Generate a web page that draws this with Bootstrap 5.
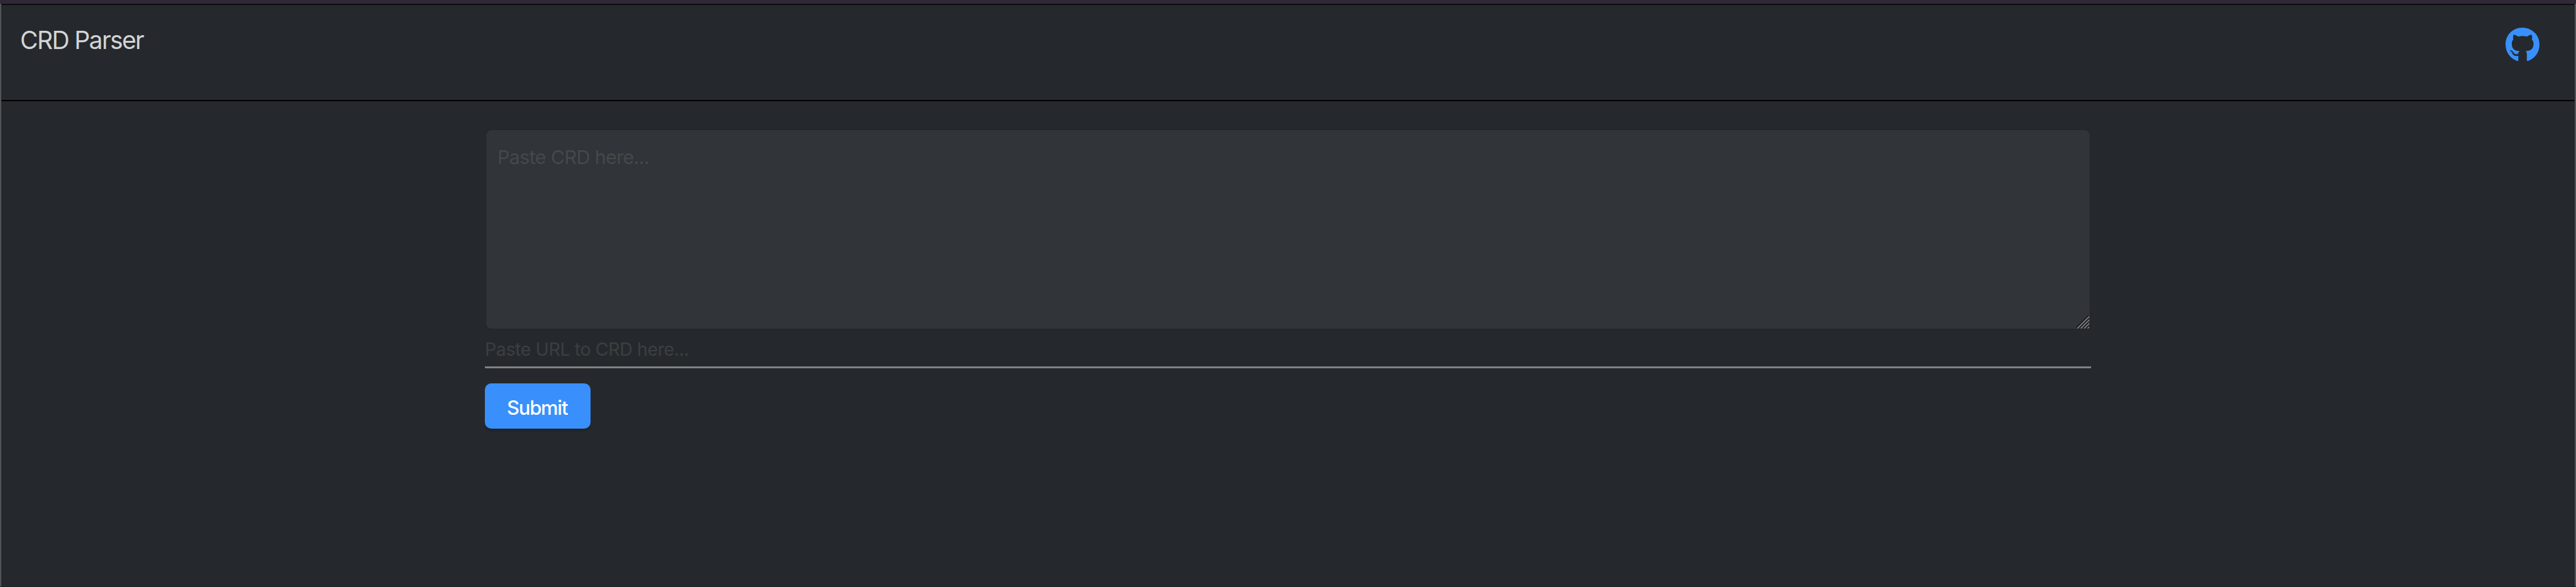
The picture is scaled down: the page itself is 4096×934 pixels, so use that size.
<!DOCTYPE html>
<html lang="en">
<head>
<meta charset="utf-8">
<meta name="viewport" content="width=device-width, initial-scale=1">
<title>CRD Parser</title>
<link href="https://cdn.jsdelivr.net/npm/bootstrap@5.3.0/dist/css/bootstrap.min.css" rel="stylesheet">
<style>
html, body { height: 100%; overflow: hidden; }
body { background: #25292d; font-family: Inter, "Liberation Sans", sans-serif; }
.window-frame { border-top: 6px solid #2d2a36; border-bottom: 1px solid #211f27; }
.window-body { border: solid #525558; border-width: 0 2px; }
.top-bar { height: 155px; padding: 32px 56px 0 30px; border-top: 2px solid #0d0d10; border-bottom: 2px solid #000; }
.site-title { font-size: 39px; line-height: 47px; letter-spacing: -1.6px; color: #d4d4d5; }
.repo-link { color: #3990fc; padding-top: 4px; }
.repo-link svg { width: 54px; height: 53px; }
.crd-form { width: 2554px; padding-top: 44px; }
.crd-box { height: 320px; }
.crd-text, .crd-text:focus { height: 320px; padding: 25px 18px; border: 2px solid #242628; border-radius: 10px; background: #313438; color: #d4d4d5; font-size: 30.4px; line-height: 37px; letter-spacing: -.6px; resize: none; overflow: hidden; }
.crd-text::placeholder { color: #44494b; opacity: 1; }
.grip { right: 2px; bottom: 2px; width: 22px; height: 22px; }
.crd-url, .crd-url:focus { height: 61px; padding: 13px 0 10px; border: 0; border-bottom: 3px solid #828282; border-radius: 0; background: transparent; color: #d4d4d5; font-size: 28.6px; line-height: 35px; letter-spacing: -.43px; box-shadow: none; }
.crd-url::placeholder { color: #3b3f41; opacity: 1; }
.send, .send:hover { width: 168px; height: 72px; margin-top: 24px; padding: 6px 0 0 35px; border: 0; border-radius: 10px; background: #3990fc; color: #fff; font-size: 31px; font-weight: 500; line-height: 66px; letter-spacing: -1.25px; box-shadow: 0 5px 0 #212429; }
</style>
<script src="https://cdn.jsdelivr.net/npm/bootstrap@5.3.0/dist/js/bootstrap.bundle.min.js"></script>
</head>
<body>
<div class="window-frame vh-100 d-flex flex-column">
  <div class="window-body flex-grow-1 d-flex flex-column">
    <header class="top-bar d-flex justify-content-between align-items-start">
      <span class="site-title">CRD Parser</span>
      <a class="repo-link d-flex" href="#" aria-label="GitHub">
        <svg viewBox="0 8 496 484" fill="currentColor" preserveAspectRatio="none"><path d="M165.9 397.4c0 2-2.3 3.6-5.2 3.6-3.3.3-5.6-1.3-5.6-3.6 0-2 2.3-3.6 5.2-3.6 3-.3 5.6 1.3 5.6 3.6zm-31.1-4.5c-.7 2 1.3 4.3 4.3 4.9 2.6 1 5.6 0 6.2-2s-1.3-4.3-4.3-5.2c-2.6-.7-5.5.3-6.2 2.3zm44.2-1.7c-2.9.7-4.9 2.6-4.6 4.9.3 2 2.9 3.3 5.9 2.6 2.9-.7 4.9-2.6 4.6-4.6-.3-1.9-3-3.2-5.9-2.9zM244.8 8C106.1 8 0 113.3 0 252c0 110.9 69.8 205.8 169.5 239.2 12.8 2.3 17.3-5.6 17.3-12.1 0-6.2-.3-40.4-.3-61.4 0 0-70 15-84.7-29.8 0 0-11.4-29.1-27.8-36.6 0 0-22.9-15.7 1.6-15.4 0 0 24.9 2 38.6 25.8 21.9 38.6 58.6 27.5 72.9 20.9 2.3-16 8.8-27.1 16-33.7-55.9-6.2-112.3-14.3-112.3-110.5 0-27.5 7.6-41.3 23.6-58.9-2.6-6.5-11.1-33.3 2.6-67.9 20.9-6.5 69 27 69 27 20-5.6 41.5-8.5 62.8-8.5s42.8 2.9 62.8 8.5c0 0 48.1-33.6 69-27 13.7 34.7 5.2 61.4 2.6 67.9 16 17.7 25.8 31.5 25.8 58.9 0 96.5-58.9 104.2-114.8 110.5 9.2 7.9 17 22.9 17 46.4 0 33.7-.3 75.4-.3 83.6 0 6.5 4.6 14.4 17.3 12.1C428.2 457.8 496 362.9 496 252 496 113.3 383.5 8 244.8 8zM97.2 352.9c-1.3 1-1 3.3.7 5.2 1.6 1.6 3.9 2.3 5.2 1 1.3-1 1-3.3-.7-5.2-1.6-1.6-3.9-2.3-5.2-1zm-10.8-8.1c-.7 1.3.3 2.9 2.3 3.9 1.6 1 3.6.7 4.3-.7.7-1.3-.3-2.9-2.3-3.9-2-.6-3.6-.3-4.3.7zm32.4 35.6c-1.6 1.3-1 4.3 1.3 6.2 2.3 2.3 5.2 2.6 6.5 1 1.3-1.3.7-4.3-1.3-6.2-2.2-2.3-5.2-2.6-6.5-1zm-11.4-14.7c-1.6 1-1.6 3.6 0 5.9 1.6 2.3 4.3 3.3 5.6 2.3 1.6-1.3 1.6-3.9 0-6.2-1.4-2.3-4-3.3-5.6-2z"/></svg>
      </a>
    </header>
    <main class="flex-grow-1">
      <form class="crd-form mx-auto d-flex flex-column align-items-start">
        <div class="crd-box w-100 position-relative">
          <textarea class="crd-text form-control d-block" placeholder="Paste CRD here..."></textarea>
          <svg class="grip position-absolute" viewBox="0 0 22 22" fill="none" stroke-width="1.6">
            <path stroke="#1d1f22" stroke-width="2.4" d="M.5 20.5 20 1M6.500 20.500 20 7M12 20.500 20 12.500M17.500 20.500 20 18"/>
            <path stroke="#85878a" d="M2 21.500 21 2.500M7.500 21.500 21 8M13 21.500 21 13.500M18.500 21.500 21 19"/>
          </svg>
        </div>
        <input class="crd-url form-control" type="text" placeholder="Paste URL to CRD here...">
        <button class="send btn text-start" type="button">Submit</button>
      </form>
    </main>
  </div>
</div>
</body>
</html>
